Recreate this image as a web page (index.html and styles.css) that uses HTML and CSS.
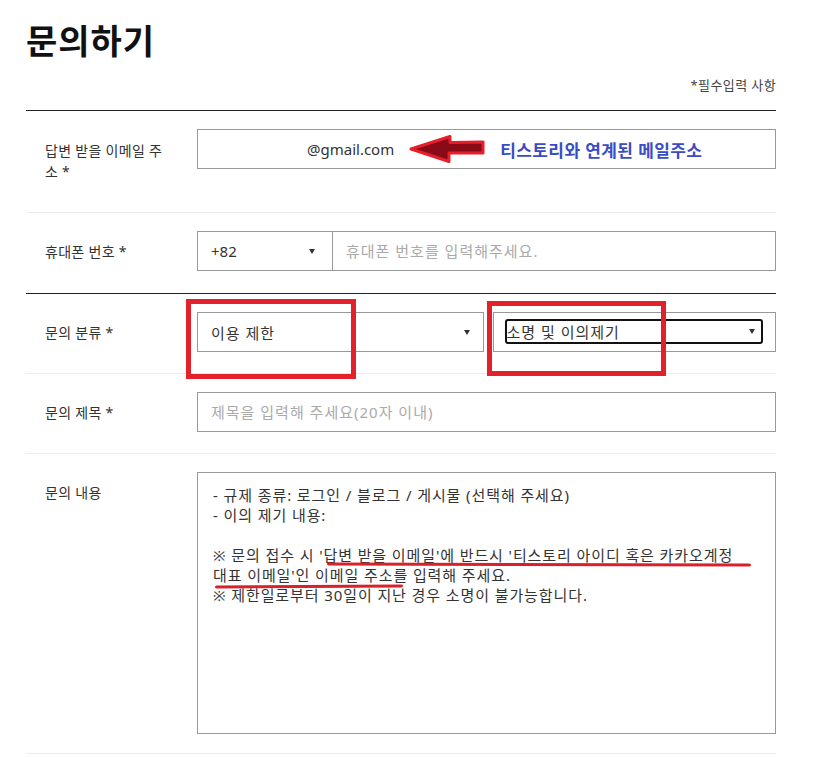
FILE: index.html
```html
<!DOCTYPE html>
<html>
<head>
  <title>문의하기</title>
  <link rel="stylesheet" href="styles.css">
</head>
<body>
  <div class="page">
    <h1 class="title">문의하기</h1>
    <p class="required-note">*필수입력 사항</p>

    <div class="form">
      <div class="row">
        <div class="label wrap">답변 받을 이메일 주소 *</div>
        <div class="field">
          <div class="box email-box">
            <span class="email">@gmail.com</span>
            <svg class="arrow" width="78" height="30" viewBox="0 0 78 30">
              <path d="M3 15 L42 2.5 L42 8.5 L75 8 L75 19 L41 19 L41 27.5 Z" fill="#8a0a17" stroke="#e4202b" stroke-width="3" stroke-linejoin="round"/>
            </svg>
            <span class="email-note">티스토리와 연계된 메일주소</span>
          </div>
        </div>
      </div>

      <div class="row divider">
        <div class="label">휴대폰 번호 *</div>
        <div class="field phone">
          <div class="box select country">
            <span>+82</span>
            <span class="caret"></span>
          </div>
          <input class="box text-input" type="text" placeholder="휴대폰 번호를 입력해주세요.">
        </div>
      </div>

      <div class="row marked">
        <div class="label">문의 분류 *</div>
        <div class="field split">
          <div class="box select">
            <span>이용 제한</span>
            <span class="caret"></span>
          </div>
          <div class="box select focused">
            <div class="focus-ring">
              <span>소명 및 이의제기</span>
              <span class="caret"></span>
            </div>
          </div>
        </div>
        <div class="mark mark-one"></div>
        <div class="mark mark-two"></div>
      </div>

      <div class="row">
        <div class="label">문의 제목 *</div>
        <div class="field">
          <input class="box text-input" type="text" placeholder="제목을 입력해 주세요(20자 이내)">
        </div>
      </div>

      <div class="row">
        <div class="label">문의 내용</div>
        <div class="field">
          <div class="textarea-wrap">
            <div class="textarea">- 규제 종류: 로그인 / 블로그 / 게시물 (선택해 주세요)
- 이의 제기 내용:

※ 문의 접수 시 '답변 받을 이메일'에 반드시 '티스토리 아이디 혹은 카카오계정
대표 이메일'인 이메일 주소를 입력해 주세요.
※ 제한일로부터 30일이 지난 경우 소명이 불가능합니다.</div>
            <div class="underline underline-one"></div>
            <div class="underline underline-two"></div>
          </div>
        </div>
      </div>
    </div>
  </div>
</body>
</html>
```

FILE: styles.css
```css
body {
  margin: 0;
  font-family: "Noto Sans", "Noto Sans CJK KR", sans-serif;
  color: #333;
  background-color: #fff;
}

.page {
  width: 750px;
  margin-left: 26px;
}

.title {
  margin: 0;
  padding-top: 21px;
  font-size: 34px;
  line-height: 40px;
  font-weight: 700;
  letter-spacing: 1px;
  color: #111;
}

.required-note {
  margin: 15px 0 16px;
  text-align: right;
  font-size: 13px;
  line-height: 18px;
  letter-spacing: 0.4px;
  color: #444;
}

.form {
  border-top: 1px solid #222;
}

.row {
  display: flex;
  padding: 18px 0 19px;
  border-bottom: 1px solid #ececec;
}

.row.divider {
  padding-bottom: 20px;
  border-bottom-color: #222;
}

.row.marked {
  position: relative;
}

.label {
  width: 171px;
  flex-shrink: 0;
  box-sizing: border-box;
  padding: 11px 34px 11px 19px;
  font-size: 14px;
  line-height: 20px;
  letter-spacing: 0.3px;
}

.label.wrap {
  line-height: 21px;
}

.field {
  flex: 1;
  display: flex;
}

.field.split {
  gap: 9px;
}

.box {
  height: 40px;
  box-sizing: border-box;
  border: 1px solid #999;
  padding: 0 13px;
  display: flex;
  align-items: center;
  font-size: 15px;
  letter-spacing: 1px;
  color: #333;
  background-color: #fff;
}

.text-input {
  flex: 1;
  min-width: 0;
  font-family: inherit;
  outline: none;
}

.text-input::placeholder {
  color: #aaa;
}

.phone .text-input {
  border-left: none;
}

.select {
  flex: 1;
  justify-content: space-between;
}

.select.country {
  flex: 0 0 136px;
  padding-right: 17px;
  letter-spacing: 0;
}

.caret {
  width: 0;
  height: 0;
  border-left: 3px solid transparent;
  border-right: 3px solid transparent;
  border-top: 5px solid #333;
}

.select.focused {
  padding: 6px 12px 7px 11px;
  align-items: stretch;
}

.focus-ring {
  flex: 1;
  display: flex;
  align-items: center;
  justify-content: space-between;
  border: 2px solid #111;
  border-radius: 3px;
  padding: 0 6px 0 0;
}

.email-box {
  flex: 1;
  letter-spacing: 0;
}

.email {
  margin-left: 96px;
}

.arrow {
  margin-left: 14px;
}

.email-note {
  margin-left: 14px;
  font-size: 17px;
  font-weight: 700;
  letter-spacing: 0.4px;
  color: #3a4cc4;
}

.mark {
  position: absolute;
  border: 5px solid #e3212b;
}

.mark-one {
  left: 160px;
  top: 5px;
  width: 160px;
  height: 70px;
}

.mark-two {
  left: 461px;
  top: 7px;
  width: 169px;
  height: 65px;
}

.textarea-wrap {
  position: relative;
  flex: 1;
}

.textarea {
  height: 262px;
  box-sizing: border-box;
  border: 1px solid #999;
  padding: 12px 15px;
  font-size: 15px;
  line-height: 20px;
  letter-spacing: 0.9px;
  white-space: pre-line;
  color: #333;
}

.underline {
  position: absolute;
  height: 3px;
  border-radius: 2px;
  background-color: #d9202b;
}

.underline-one {
  left: 130px;
  top: 91px;
  width: 424px;
  transform: rotate(0.15deg);
}

.underline-two {
  left: 18px;
  top: 113px;
  width: 188px;
  transform: rotate(-0.3deg);
}
```
